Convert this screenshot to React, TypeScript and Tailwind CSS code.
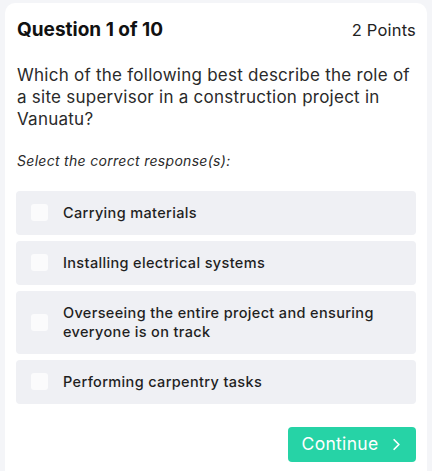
import { ChevronRight } from "lucide-react";

const options = [
  "Carrying materials",
  "Installing electrical systems",
  "Overseeing the entire project and ensuring everyone is on track",
  "Performing carpentry tasks",
];

export default function App() {
  return (
    <div
      className="min-h-[471px] h-[471px] overflow-hidden bg-[#f4f5f8] pl-[5px] pr-[5px] pt-[3px]"
      style={{ fontFamily: "Inter, 'Noto Sans', sans-serif" }}
    >
      <div className="h-[520px] rounded-[10px] bg-white px-[11px] pt-[13px]">
        {/* Header */}
        <div className="flex items-center justify-between pl-[1px]">
          <h1 className="text-[19px] font-bold text-[#111]">Question 1 of 10</h1>
          <span className="text-[16.5px] tracking-[0.2px] text-[#222]">2 Points</span>
        </div>

        {/* Question */}
        <p className="mt-[19px] pl-[1px] text-[17px] leading-[22px] tracking-[0.25px] text-[#2a2a2a]">
          Which of the following best describe the role of a site supervisor in a construction project in
          Vanuatu?
        </p>

        <p className="mt-[20px] pl-[1px] text-[14px] italic tracking-[0.3px] text-[#2a2a2a]">
          Select the correct response(s):
        </p>

        {/* Options */}
        <div className="mt-[20px] flex flex-col gap-[6px]">
          {options.map((opt) => (
            <label
              key={opt}
              className="flex min-h-[44px] items-center gap-[15px] rounded-[4px] bg-[#eff0f4] py-[12.5px] pl-[15px] pr-[30px]"
            >
              <span className="h-[17px] w-[17px] shrink-0 rounded-[3px] bg-[#fbfbfc]" />
              <span className="text-[14.5px] font-medium leading-[19px] tracking-[0.35px] text-[#1f1f1f]">
                {opt}
              </span>
            </label>
          ))}
        </div>

        {/* Footer */}
        <div className="mt-[23px] flex justify-end">
          <button className="flex h-[35px] w-[128px] items-center justify-center gap-[9px] rounded-[4px] bg-[#26d3a6] pl-[4px] text-[17.5px] tracking-[0.3px] text-white">
            Continue
            <ChevronRight className="h-[19px] w-[19px]" strokeWidth={2.2} />
          </button>
        </div>
      </div>
    </div>
  );
}
